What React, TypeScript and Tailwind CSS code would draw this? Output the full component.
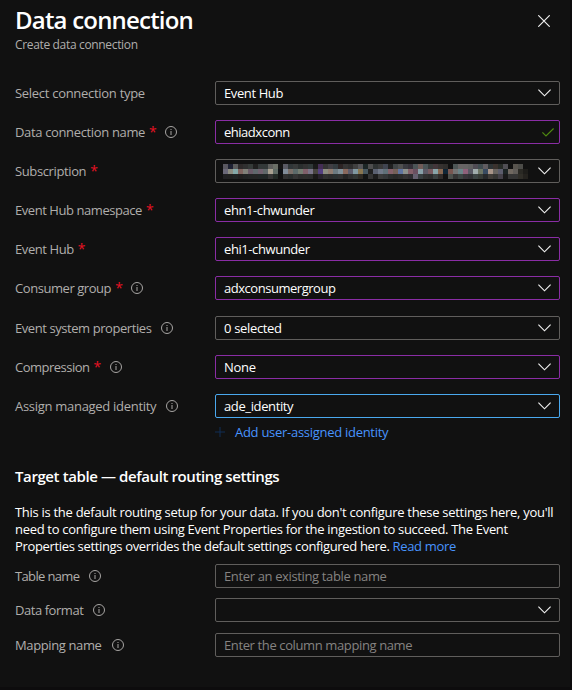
import type { ReactNode } from 'react';

type Field = {
  label: string;
  track: string;
  required?: boolean;
  info?: boolean;
  border: string;
  value?: string;
  valueTrack?: string;
  placeholder?: boolean;
  icon: 'chevron' | 'check' | 'none';
  redacted?: boolean;
  margin: string;
};

const GRAY = 'border-[#605e5c]';
const PURPLE = 'border-[#8a2da5]';

const connection: Field[] = [
  { label: 'Select connection type', track: 'tracking-[-0.29px]', border: GRAY, value: 'Event Hub', valueTrack: 'tracking-[-0.39px]', icon: 'chevron', margin: 'mt-0' },
  { label: 'Data connection name', track: 'tracking-[-0.35px]', required: true, info: true, border: PURPLE, value: 'ehiadxconn', valueTrack: 'tracking-[-0.48px]', icon: 'check', margin: 'mt-[15px]' },
  { label: 'Subscription', track: 'tracking-[-0.38px]', required: true, border: GRAY, icon: 'chevron', redacted: true, margin: 'mt-[15px]' },
  { label: 'Event Hub namespace', track: 'tracking-[-0.44px]', required: true, border: PURPLE, value: 'ehn1-chwunder', valueTrack: 'tracking-[-0.41px]', icon: 'chevron', margin: 'mt-[15px]' },
  { label: 'Event Hub', track: 'tracking-[-0.42px]', required: true, border: PURPLE, value: 'ehi1-chwunder', valueTrack: 'tracking-[-0.41px]', icon: 'chevron', margin: 'mt-[15px]' },
  { label: 'Consumer group', track: 'tracking-[-0.44px]', required: true, info: true, border: PURPLE, value: 'adxconsumergroup', valueTrack: 'tracking-[-0.47px]', icon: 'chevron', margin: 'mt-[15px]' },
  { label: 'Event system properties', track: 'tracking-[-0.43px]', info: true, border: GRAY, value: '0 selected', valueTrack: 'tracking-[-0.33px]', icon: 'chevron', margin: 'mt-4' },
  { label: 'Compression', track: 'tracking-[-0.5px]', required: true, info: true, border: PURPLE, value: 'None', valueTrack: 'tracking-[-0.3px]', icon: 'chevron', margin: 'mt-[15px]' },
  { label: 'Assign managed identity', track: 'tracking-[-0.29px]', info: true, border: 'border-[#4aa8ee]', value: 'ade_identity', valueTrack: 'tracking-[-0.38px]', icon: 'chevron', margin: 'mt-[15px]' },
];

const target: Field[] = [
  { label: 'Table name', track: 'tracking-[-0.65px]', info: true, border: GRAY, value: 'Enter an existing table name', valueTrack: 'tracking-[-0.36px]', placeholder: true, icon: 'none', margin: 'mt-0' },
  { label: 'Data format', track: 'tracking-[-0.45px]', info: true, border: GRAY, icon: 'chevron', margin: 'mt-2.5' },
  { label: 'Mapping name', track: 'tracking-[-0.38px]', info: true, border: GRAY, value: 'Enter the column mapping name', valueTrack: 'tracking-[-0.38px]', placeholder: true, icon: 'none', margin: 'mt-[11px]' },
];

// Pixelated redaction of the subscription name: three rows of 5px cells.
const mosaic = [
  '5a5860 1f2233 5c5c5c 2e2a2a 303030 353a38 201f1f 333838 333838 5e5e5c 6a6e66 151515 5a5a64 303638 383a3a 2a2e2e 323232 303838 1a1a1a 442e55 343434 403f44 343c40 2c2424 343434 2e2e2e 404040 555558 1c2626 4e4e4e 2e3232 3a3a3a 404450 202020 404446 505050 3a3a40 343038 4c5456 705c58 4a5456 363a3a 42363a 363230 302e2c 111111 4e5656 686464 666464 606060 504c54 404c50 605c60 2e3436 3a322e 282c28 504e54 111111 58544e 4c4c48 111111',
  '6a6878 8c8c80 84a8a8 80645f 808078 6a5a68 60686c 70606e 60686a a8a090 5e6a64 0e1014 808c98 7a6e68 5c6a6a 747c70 80606a 7a7488 484440 543f80 8c8c80 907c70 6c7a80 809098 88685c 5c5c6c 8098a0 887650 485860 202020 5a6070 707888 607078 84606a 746058 6074a0 8c908c 84606a 6a5060 88a0a8 5c5864 785a60 88a4a8 866650 102636 785650 747474 6a8488 8e607a 585864 a0acac 6c7464 384a60 a89488 686460 5c5c6c 1c2424 706860 605c58 2a2924 1e1d1a',
  '202022 202020 202424 201e1e 202222 222424 242424 202626 202626 343434 202824 111111 303030 282c2c 343434 2c2c2c 2e2e2c 2c2c2c 1a1818 28222c 303030 2c2c2c 2a3030 303030 242424 2e2e2e 323634 2e2a24 121414 343434 1c1c1c 3a3a3a 343638 2a2c2c 282828 2c2c2c 343234 2e2c30 666070 383e40 303030 2c2c2c 3a4040 302c2a 111111 4c504c 343434 3c4442 38343a 303034 3c4444 363a36 26282a 403c38 343432 444048 181818 343434 343434 302e28 24221e',
].map((row) => row.split(' ').map((c) => '#' + c));

function Redacted() {
  return (
    <div className="-ml-px flex h-[15px] flex-col">
      {mosaic.map((row, i) => (
        <div key={i} className="flex">
          {row.map((color, j) => (
            <div key={j} className="size-[5px] shrink-0" style={{ backgroundColor: color }} />
          ))}
        </div>
      ))}
    </div>
  );
}

function InfoIcon() {
  return (
    <svg className="size-3" viewBox="0 0 12 12" fill="none" stroke="#a8a6a4">
      <circle cx="6" cy="6" r="5.5" strokeWidth="1" />
      <path d="M6 5v4M6 3v1" strokeWidth="1" />
    </svg>
  );
}

function Chevron() {
  return (
    <svg className="mr-2 h-2 w-[13px] shrink-0" viewBox="0 0 13 8" fill="none" stroke="#f0f0f0" strokeWidth="1.15">
      <path d="M.4 .6 6.5 6.8 12.6 .6" />
    </svg>
  );
}

function Check() {
  return (
    <svg className="mr-[5px] h-[9px] w-3 shrink-0" viewBox="0 0 12 9" fill="none" stroke="#4f8a10" strokeWidth="1.15">
      <path d="M.4 4.4 4 8 11.6 .5" />
    </svg>
  );
}

function Row({ field }: { field: Field }) {
  return (
    <div className={'flex h-6 ' + field.margin}>
      <div className="flex w-[200px] shrink-0 items-center text-[#b0aeac]">
        <span className={field.track}>{field.label}</span>
        {field.required && <span className="ml-1 w-[7px] text-sm leading-4 text-[#e81123]">*</span>}
        {field.info && (
          <span className={field.required ? 'ml-[9px]' : 'ml-2.5'}>
            <InfoIcon />
          </span>
        )}
      </div>
      <div className={'flex flex-1 items-center justify-between rounded-[2px] border pl-2 ' + field.border}>
        {field.redacted ? (
          <Redacted />
        ) : (
          <span className={(field.placeholder ? 'text-[#858381] ' : 'text-white ') + (field.valueTrack ?? '')}>{field.value}</span>
        )}
        {field.icon === 'chevron' && <Chevron />}
        {field.icon === 'check' && <Check />}
      </div>
    </div>
  );
}

function Line({ track, children }: { track: string; children: ReactNode }) {
  return <span className={'block whitespace-nowrap ' + track}>{children}</span>;
}

export default function App() {
  return (
    <div className="h-[690px] w-[572px] overflow-hidden border-r-2 border-b-[3px] border-[#0d0c0d] bg-[#111111] pr-2.5 pl-[15px] font-['Open_Sans',sans-serif] text-[13px] leading-[17px] whitespace-nowrap">
      <header className="flex h-[81px] justify-between">
        <div>
          <h1 className="mt-1 text-2xl leading-8 font-semibold tracking-[-0.8px] text-white">Data connection</h1>
          <p className="text-xs leading-[17px] tracking-[-0.34px] text-[#b0aeac]">Create data connection</p>
        </div>
        <svg className="mt-[15px] mr-2.5 size-3" viewBox="0 0 12 12" fill="none" stroke="#f0f0f0" strokeWidth="1.15">
          <path d="M.3 .3 11.7 11.7M11.7 .3 .3 11.7" />
        </svg>
      </header>
      {connection.map((f) => (
        <Row key={f.label} field={f} />
      ))}
      <a className="mt-[5px] ml-[200px] flex h-[18px] items-center text-[#4894fe]">
        <svg className="mr-2.5 size-2.5" viewBox="0 0 10 10" stroke="#102e57">
          <path d="M5 0v10M0 5h10" />
        </svg>
        <span className="tracking-[-0.28px]">Add user-assigned identity</span>
      </a>
      <h2 className="mt-[25px] text-[15px] leading-5 font-semibold tracking-[-0.4px] text-white">Target table — default routing settings</h2>
      <p className="mt-[18px] mb-[9px] text-white">
        <Line track="tracking-[-0.29px]">This is the default routing setup for your data. If you don't configure these settings here, you'll</Line>
        <Line track="tracking-[-0.31px]">need to configure them using Event Properties for the ingestion to succeed. The Event</Line>
        <Line track="tracking-[-0.34px]">
          Properties settings overrides the default settings configured here. <a className="text-[#4894fe]">Read more</a>
        </Line>
      </p>
      {target.map((f) => (
        <Row key={f.label} field={f} />
      ))}
    </div>
  );
}
